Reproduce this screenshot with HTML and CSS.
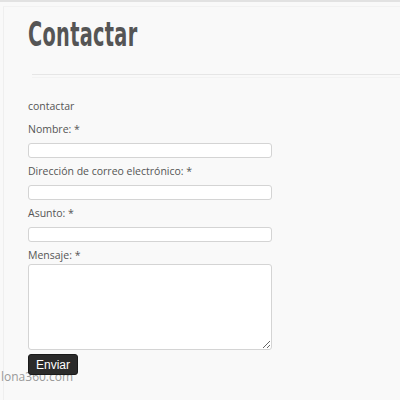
FILE: index.html
```html
<!DOCTYPE html>
<html lang="es">
<head>
<meta charset="utf-8">
<link rel="stylesheet" href="styles.css">
</head>
<body>
<div class="page">
  <div class="frame">
    <h1 class="title">Contactar</h1>
    <div class="rule"></div>
    <form class="form">
      <p class="intro">contactar</p>
      <label class="label">Nombre: *</label>
      <input class="field" type="text">
      <label class="label">Dirección de correo electrónico: *</label>
      <input class="field" type="text">
      <label class="label">Asunto: *</label>
      <input class="field" type="text">
      <label class="label label-last">Mensaje: *</label>
      <textarea class="area"></textarea>
      <div class="actions">
        <span class="watermark">lona360.com</span>
        <button class="send" type="button">Enviar</button>
      </div>
    </form>
  </div>
</div>
</body>
</html>
```
FILE: styles.css
```css
html, body { margin: 0; padding: 0; }
body { background: #f9f9f9; font-family: "Open Sans", sans-serif; color: #555; }
.page { border-top: 2px solid #e2e2e2; height: 398px; overflow: hidden; }
.frame { margin-left: 3px; margin-top: 4px; border-left: 1px solid #efefef; border-top: 1px solid #f2f2f2; padding-left: 24px; height: 400px; }
.title { margin: 0; padding-top: 9px; font-family: "DejaVu Sans Condensed", sans-serif; font-weight: bold; font-size: 33px; line-height: 38px; color: #555; transform: scaleX(0.65); transform-origin: left; letter-spacing: 0.5px; }
.rule { margin-top: 20px; margin-left: 4px; border-top: 1px solid #e6e6e6; border-bottom: 1px solid #f3f3f3; height: 2px; }
.form { display: flex; flex-direction: column; align-items: flex-start; padding-top: 20px; }
.intro { margin: 0 0 7px; font-size: 10.5px; line-height: 16px; }
.label { font-size: 10.5px; line-height: 16px; margin-bottom: 6px; }
.label-last { margin-bottom: 1px; }
.field { box-sizing: border-box; width: 244px; height: 15px; margin: 0 0 5px; border: 1px solid #d4d4d4; border-radius: 3px; background: #fff; padding: 0; }
.area { display: block; box-sizing: border-box; width: 244px; height: 86px; margin: 0; border: 1px solid #d4d4d4; border-radius: 3px; background: #fff; padding: 0; }
.actions { position: relative; margin-top: 4px; }
.watermark { position: absolute; left: -27px; top: 14px; font-size: 12px; color: #9a9a9a; white-space: nowrap; }
.send { position: relative; display: block; font-family: "Liberation Sans", sans-serif; font-size: 12px; color: #fff; background: #2b2b2b; border: 1px solid #1a1a1a; border-radius: 3px; height: 21px; padding: 0 7px; }
```
